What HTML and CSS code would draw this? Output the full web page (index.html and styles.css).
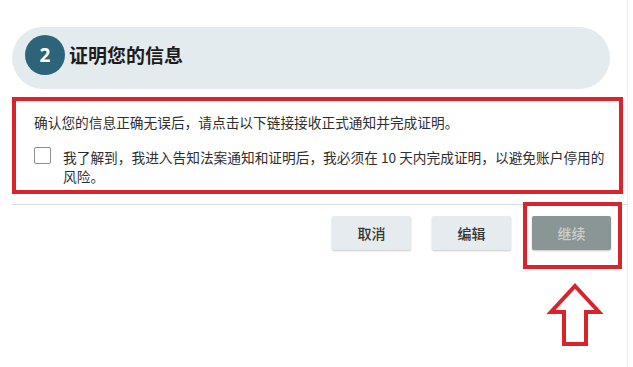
FILE: index.html
```html
<!DOCTYPE html>
<html lang="zh-CN">
<head>
<meta charset="utf-8">
<title>证明您的信息</title>
<link rel="stylesheet" href="styles.css">
</head>
<body>
<div class="panel">
  <div class="step-header">
    <span class="step-num">2</span>
    <h2 class="step-title">证明您的信息</h2>
  </div>
  <div class="notice">
    <p class="notice-text">确认您的信息正确无误后，请点击以下链接接收正式通知并完成证明。</p>
    <label class="agree">
      <span class="checkbox"></span>
      <span class="agree-text">我了解到，我进入告知法案通知和证明后，我必须在 10 天内完成证明，以避免账户停用的风险。</span>
    </label>
  </div>
  <div class="actions">
    <button class="btn">取消</button>
    <button class="btn">编辑</button>
    <div class="continue-wrap">
      <button class="btn btn-primary">继续</button>
      <span class="highlight"></span>
      <svg class="arrow" width="58" height="66" viewBox="0 0 58 66">
        <polygon points="29,4 53,30 40,30 40,62 18,62 18,30 5,30" fill="none" stroke="#d8232b" stroke-width="4" stroke-linejoin="miter"/>
      </svg>
    </div>
  </div>
</div>
</body>
</html>
```
FILE: styles.css
```css
* { box-sizing: border-box; }
html, body { margin: 0; padding: 0; background: #ffffff; }
body {
  font-family: "Noto Sans CJK SC", "Noto Sans", sans-serif;
  color: #2b2b2b;
  width: 633px;
  height: 367px;
  overflow: hidden;
}
.panel {
  width: 628px;
  height: 367px;
  border-right: 1px solid #efefef;
  padding-top: 27px;
}
.step-header {
  margin: 0 17px 0 12px;
  height: 62px;
  border-radius: 31px;
  background: #e4ebee;
  display: flex;
  align-items: flex-start;
  padding: 8px 0 0 13px;
}
.step-num {
  width: 40px;
  height: 40px;
  border-radius: 50%;
  background: #2e6479;
  color: #ffffff;
  font-family: "Noto Sans", "Open Sans", sans-serif;
  font-weight: 700;
  font-size: 19px;
  display: flex;
  align-items: center;
  justify-content: center;
}
.step-title {
  margin: 0 0 0 4px;
  font-size: 19px;
  font-weight: 700;
  line-height: 40px;
  color: #1c1c1c;
}
.notice {
  margin: 8px 0 0 12px;
  width: 611px;
  border: 4px solid #d7242d;
  padding: 11px 5px 4px 18px;
  font-size: 13.7px;
  color: #2e2e2e;
}
.notice-text {
  margin: 0;
  line-height: 20px;
}
.agree {
  display: flex;
  align-items: flex-start;
  margin-top: 16px;
}
.checkbox {
  flex: none;
  width: 17px;
  height: 17px;
  border: 1.5px solid #8e8e8e;
  border-radius: 2px;
  margin-top: -1px;
  margin-right: 12px;
}
.agree-text {
  line-height: 19px;
}
.actions {
  margin: 10px 0 0 12px;
  border-top: 1px solid #dadada;
  padding: 11px 16px 0 0;
  display: flex;
  justify-content: flex-end;
  gap: 21px;
}
.btn {
  width: 79px;
  height: 34px;
  border: none;
  border-radius: 2px;
  background: #e5ebee;
  color: #333333;
  font-family: "Noto Sans CJK SC", "Noto Sans", sans-serif;
  font-size: 14px;
  font-weight: 500;
  box-shadow: 0 1px 2px rgba(0, 0, 0, 0.22);
  padding: 0;
}
.btn-primary {
  background: #8a9595;
  color: #c9d0d0;
}
.continue-wrap {
  position: relative;
  height: 34px;
}
.highlight {
  position: absolute;
  left: -9px;
  right: -11px;
  top: -14px;
  bottom: -19px;
  border: 4px solid #d7242d;
}
.arrow {
  position: absolute;
  left: 14px;
  top: 66px;
}
```
